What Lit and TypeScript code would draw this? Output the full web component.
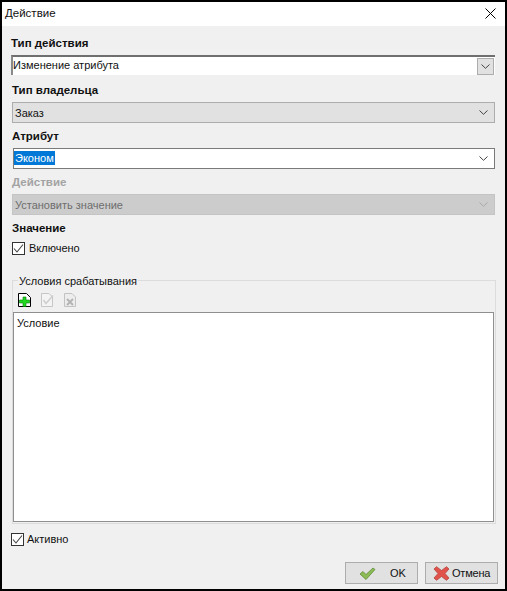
import { LitElement, html, css } from "lit";
import { customElement } from "lit/decorators.js";

const chevron = html`<svg class="chev" width="9" height="5" viewBox="0 0 9 5"><path d="M.5.5 4.5 4.3 8.5.5" fill="none" stroke="currentColor" stroke-width="1"/></svg>`;
const check = html`<svg width="11" height="11" viewBox="0 0 11 11"><path d="M1 5.5 4 9 10 1.5" fill="none" stroke="#444" stroke-width="1.1"/></svg>`;

@customElement("app-root")
export class AppRoot extends LitElement {
  static styles = css`
    :host { display: block; width: 507px; height: 591px; font-family: "Liberation Sans", sans-serif; font-size: 11px; color: #111; }
    * { box-sizing: border-box; }
    .win { width: 507px; height: 591px; display: flex; flex-direction: column; background: #f0f0f0; border: 2px solid #000; }
    .title { height: 24px; flex: none; background: #fff; display: flex; align-items: center; justify-content: space-between; padding: 0 9px 2px 3px; font-size: 11.5px; }
    .x { display: block; }
    .body { flex: 1; display: flex; flex-direction: column; padding: 9px 10px 5px 10px; min-height: 0; }
    .label { font-weight: 700; font-size: 11.5px; height: 16px; line-height: 16px; }
    .label.first { margin-left: -1px; }
    .label.dis { color: #a3a3a3; }
    .combo { height: 21px; display: flex; align-items: center; justify-content: space-between; margin: 4px 0 5px 0; padding: 0 4px 0 2px; }
    .combo.edit1 { background: #fff; border-top: 2px solid #6f6f6f; border-left: 2px solid #8a8a8a; margin: 4px 0 7px -1px; height: 20px; padding: 0 1px 0 0; }
    .combo.edit1 span { margin-top: -2px; }
    .combo.ro { background: #e1e1e1; border: 1px solid #adadad; }
    .combo.edit2 { background: #fff; border: 1px solid #7a7a7a; margin-left: 1px; padding-left: 0; padding-bottom: 1px; }
    .combo.off { background: #cccccc; border: 1px solid #c4c4c4; color: #6d6d6d; }
    .combo.off .chev { color: #a8a8a8; }
    .btn1 { width: 17px; height: 17px; background: #e1e1e1; border: 1px solid #adadad; display: flex; align-items: center; justify-content: center; color: #555; }
    .chev { color: #444; margin-right: 2px; flex: none; }
    .btn1 .chev { margin: 0; }
    .sel { background: #0078d7; color: #fff; padding: 0 1px; line-height: 14px; }
    .chk { display: flex; align-items: center; gap: 4px; height: 14px; margin-top: 5px; }
    .box { width: 13px; height: 13px; border: 1px solid #333; background: #fff; display: flex; align-items: center; justify-content: center; flex: none; }
    .box svg { flex: none; }
    .group { position: relative; margin: 25px -1px 0 0; height: 244px; border: 1px solid #dcdcdc; padding: 12px 1px 1px 0; display: flex; flex-direction: column; flex: none; }
    .legend { position: absolute; left: 5px; top: -7px; background: #f0f0f0; padding: 0 1px; line-height: 14px; }
    .tools { height: 19px; display: flex; align-items: flex-start; gap: 10px; padding-left: 5px; flex: none; }
    .tools svg { display: block; }
    .list { flex: 1; background: #fff; border: 1px solid #8f8f8f; padding: 3px 3px; min-height: 0; line-height: 14px; }
    .chk.active { margin-top: 8px; margin-left: -1px; gap: 3px; }
    .foot { margin-top: auto; margin-right: -3px; display: flex; justify-content: flex-end; gap: 7px; }
    .b { width: 73px; height: 22px; background: #e1e1e1; border: 1px solid #adadad; display: flex; align-items: center; }
    .ok { padding-left: 13px; gap: 14px; }
    .cancel { padding-left: 7px; gap: 2px; letter-spacing: -0.2px; }
  `;

  render() {
    return html`<div class="win">
      <div class="title"><span>Действие</span>
        <svg class="x" width="11" height="11" viewBox="0 0 11 11"><path d="M.5.5 10.5 10.5M10.5.5.5 10.5" stroke="#000" fill="none"/></svg>
      </div>
      <div class="body">
        <div class="label first">Тип действия</div>
        <div class="combo edit1"><span>Изменение атрибута</span><div class="btn1">${chevron}</div></div>
        <div class="label">Тип владельца</div>
        <div class="combo ro"><span>Заказ</span>${chevron}</div>
        <div class="label">Атрибут</div>
        <div class="combo edit2"><span class="sel">Эконом</span>${chevron}</div>
        <div class="label dis">Действие</div>
        <div class="combo off"><span>Установить значение</span>${chevron}</div>
        <div class="label">Значение</div>
        <div class="chk"><div class="box">${check}</div><span>Включено</span></div>
        <div class="group">
          <span class="legend">Условия срабатывания</span>
          <div class="tools">
            <svg width="13" height="14" viewBox="0 0 13 14"><path d="M.5.5H8.5L12.5 4.5V13.5H.5Z" fill="#fff" stroke="#000"/><path d="M5 4H8V7H11.5V10H8V13.5H5V10H1.5V7H5Z" fill="#1fd81f" stroke="#0a7a0a" stroke-width=".6"/></svg>
            <svg width="13" height="14" viewBox="0 0 13 14"><path d="M.5.5H8L11.5 4V13.5H.5Z" fill="#f4f4f4" stroke="#c6c6c6"/><path d="M2.5 7 5 10.5 12 2.5" fill="none" stroke="#cfcfcf" stroke-width="1.6"/></svg>
            <svg width="13" height="14" viewBox="0 0 13 14"><path d="M.5.5H8L11.5 4V13.5H.5Z" fill="#ededed" stroke="#c2c2c2"/><path d="M3 6 9 12M9 6 3 12" fill="none" stroke="#b4b4b4" stroke-width="2"/></svg>
          </div>
          <div class="list">Условие</div>
        </div>
        <div class="chk active"><div class="box">${check}</div><span>Активно</span></div>
        <div class="foot">
          <div class="b ok"><svg width="17" height="13" viewBox="0 0 17 13"><path d="M1 7 4 4.5 7 7.5 14 1 16 2.5 7 12.5Z" fill="#8dbb55" stroke="#5d8c3a" stroke-width=".8"/></svg><span>OK</span></div>
          <div class="b cancel"><svg width="17" height="15" viewBox="0 0 17 15"><path d="M1 3 3.5.7 8.5 4.5 13.5.7 16 3 12 7.5 16 12 13.5 14.3 8.5 10.5 3.5 14.3 1 12 5 7.5Z" fill="#e0524a" stroke="#b2453f" stroke-width=".8"/></svg><span>Отмена</span></div>
        </div>
      </div>
    </div>`;
  }
}
